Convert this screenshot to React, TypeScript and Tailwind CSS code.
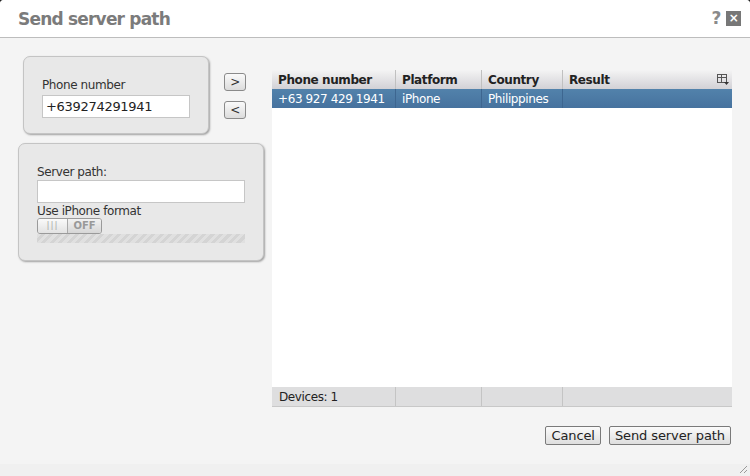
import React from "react";

const font = { fontFamily: '"DejaVu Sans", Verdana, sans-serif' };

const columns = [
	{ name: "Phone number", width: "w-[124px]" },
	{ name: "Platform", width: "w-[86px]" },
	{ name: "Country", width: "w-[81px]" },
	{ name: "Result", width: "flex-1" },
];

const rows = [
	{ phone: "+63 927 429 1941", platform: "iPhone", country: "Philippines", result: "" },
];

const SmallButton = ({ children }: { children: React.ReactNode }) => (
	<button className="w-[22px] h-[18px] rounded-[3px] border border-[#8a8a8a] bg-gradient-to-b from-[#fafafa] to-[#dcdcdc] text-[12px] leading-none text-[#333] flex items-center justify-center">
		{children}
	</button>
);

const DialogButton = ({ children }: { children: React.ReactNode }) => (
	<button className="h-[19px] px-[5px] rounded-[2px] border border-[#7a7a7a] bg-gradient-to-b from-[#fbfbfb] to-[#dedede] text-[13px] tracking-[-0.1px] leading-none text-[#222] whitespace-nowrap">
		{children}
	</button>
);

export default function App() {
	return (
		<div className="w-[750px] h-[476px] bg-[#222] overflow-hidden tracking-[-0.4px]" style={font}>
			<div className="w-full h-full rounded-t-[4px] bg-[#f4f4f4] flex flex-col overflow-hidden">
				{/* title bar */}
				<div className="h-[38px] shrink-0 bg-white border-b border-[#bdbdbd] flex items-center pl-[18px] pr-[9px]">
					<h1 className="text-[17px] font-bold text-[#7b7b7b] tracking-[-0.8px] mt-[2px]">Send server path</h1>
					<div className="ml-auto flex items-center gap-[5px] mt-[-1px]">
						<span className="text-[17px] font-bold text-[#8a8a8a] leading-none">?</span>
						<span className="w-[15px] h-[15px] bg-[#777] text-white text-[12px] font-bold leading-none flex items-center justify-center">
							×
						</span>
					</div>
				</div>

				{/* body */}
				<div className="flex-1 flex flex-col">
					<div className="flex pt-[18px]">
						<div className="w-[272px] shrink-0 flex flex-col">
							<div className="flex">
								<div className="ml-[23px] w-[186px] h-[78px] rounded-[7px] border border-[#c4c4c4] bg-[#e8e8e8] shadow-[1px_1px_2px_rgba(0,0,0,0.35)] pl-[18px] pt-[21px]">
									<div className="text-[12px] text-[#333] leading-[14px]">Phone number</div>
									<input
										readOnly
										value="+639274291941"
										className="mt-[3px] w-[148px] h-[23px] bg-white border border-[#c6c6c6] px-[3px] text-[13px] tracking-[-0.3px] text-[#222] outline-none"
										style={font}
									/>
								</div>
								<div className="ml-[15px] mt-[17px] flex flex-col gap-[10px]">
									<SmallButton>&gt;</SmallButton>
									<SmallButton>&lt;</SmallButton>
								</div>
							</div>
							<div className="ml-[18px] mt-[9px] w-[246px] h-[118px] rounded-[7px] border border-[#c4c4c4] bg-[#e8e8e8] shadow-[1px_1px_2px_rgba(0,0,0,0.35)] pl-[18px] pt-[21px]">
								<div className="text-[12px] text-[#333] leading-[14px]">Server path:</div>
								<input
									readOnly
									className="mt-[1px] w-[208px] h-[23px] bg-white border border-[#c6c6c6] outline-none"
								/>
								<div className="text-[12px] text-[#333] leading-[13px] mt-[1px]">Use iPhone format</div>
								<div className="flex h-[16px] w-[65px] rounded-[3px] border border-[#9a9a9a] overflow-hidden">
									<div className="w-[30px] bg-gradient-to-b from-[#fafafa] to-[#e2e2e2] flex items-center justify-center text-[9px] text-[#aaa] tracking-[1px] border-r border-[#aaa]">
										|||
									</div>
									<div className="flex-1 bg-gradient-to-b from-[#f2f2f2] to-[#d6d6d6] flex items-center justify-center text-[10px] font-bold text-[#999] tracking-normal">
										OFF
									</div>
								</div>
								<div className="w-[208px] h-[9px] bg-[repeating-linear-gradient(135deg,#e0e0e0_0px,#e0e0e0_3px,#d4d4d4_3px,#d4d4d4_6px)]" />
							</div>
						</div>

						{/* grid */}
						<div className="mt-[14px] w-[460px] h-[337px] bg-white flex flex-col">
							<div className="h-[19px] flex bg-gradient-to-b from-[#f4f4f4] to-[#d2d1d6]">
								{columns.map((c, i) => (
									<div
										key={c.name}
										className={`${c.width} ${i < columns.length - 1 ? "border-r border-[#c0c0c0]" : ""} px-[6px] flex items-center text-[12px] font-bold text-[#222] leading-none whitespace-nowrap`}
									>
										{c.name}
										{i === columns.length - 1 && (
											<svg className="ml-auto mr-[-3px]" width="12" height="11" viewBox="0 0 12 11">
												<rect x="0.5" y="0.5" width="9" height="8" fill="none" stroke="#555" />
												<line x1="0.5" y1="3.5" x2="9.5" y2="3.5" stroke="#555" />
												<line x1="4.5" y1="0.5" x2="4.5" y2="8.5" stroke="#555" />
												<path d="M7 8h5l-2.5 3z" fill="#333" />
											</svg>
										)}
									</div>
								))}
							</div>
							{rows.map((r) => (
								<div key={r.phone} className="h-[19px] flex bg-gradient-to-b from-[#5282ab] to-[#46729e] text-white text-[12px] leading-none whitespace-nowrap">
									<div className="w-[124px] px-[6px] flex items-center border-r border-[#3d6690]">{r.phone}</div>
									<div className="w-[86px] px-[6px] flex items-center border-r border-[#3d6690]">{r.platform}</div>
									<div className="w-[81px] px-[6px] flex items-center border-r border-[#3d6690]">{r.country}</div>
									<div className="flex-1 px-[6px] flex items-center">{r.result}</div>
								</div>
							))}
							<div className="flex-1" />
							<div className="h-[20px] flex bg-[#dededf] border-b border-[#c8c8c8] text-[12px] text-[#222] leading-none">
								<div className="w-[124px] px-[7px] flex items-center border-r border-[#c4c4c4]">Devices: 1</div>
								<div className="w-[86px] border-r border-[#c4c4c4]" />
								<div className="w-[81px] border-r border-[#c4c4c4]" />
								<div className="flex-1" />
							</div>
						</div>
					</div>

					<div className="flex justify-end gap-[8px] pr-[19px] mt-[19px]">
						<DialogButton>Cancel</DialogButton>
						<DialogButton>Send server path</DialogButton>
					</div>

					<div className="mt-auto h-[12px] bg-[#f0f0f0] flex justify-end items-end pr-[2px] pb-[2px]">
						<svg width="10" height="10" viewBox="0 0 10 10">
							<line x1="9" y1="2" x2="2" y2="9" stroke="#999" />
							<line x1="9" y1="6" x2="6" y2="9" stroke="#999" />
						</svg>
					</div>
				</div>
			</div>
		</div>
	);
}
